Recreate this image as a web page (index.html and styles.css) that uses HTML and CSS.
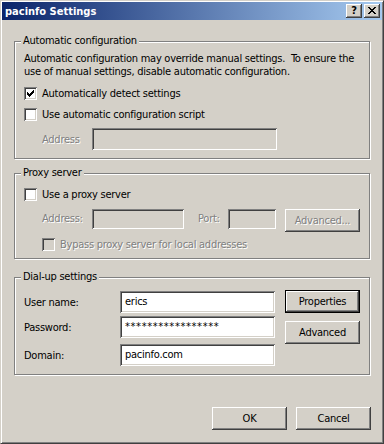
FILE: index.html
```html
<!DOCTYPE html>
<html lang="en">
<head>
  <meta charset="UTF-8" />
  <title>pacinfo Settings</title>
  <link rel="stylesheet" href="styles.css">
</head>
<body>
  <div class="window">
    <div class="titlebar">
      <span class="title">pacinfo Settings</span>
      <div class="caption-btns">
        <div class="cap-btn help">?</div>
        <div class="cap-btn">
          <svg width="8" height="7" viewBox="0 0 8 7" shape-rendering="crispEdges"><path fill="#000" d="M0 0h2v1H0zM6 0h2v1H6zM1 1h2v1H1zM5 1h2v1H5zM2 2h4v1H2zM3 3h2v1H3zM2 4h4v1H2zM1 5h2v1H1zM5 5h2v1H5zM0 6h2v1H0zM6 6h2v1H6z"/></svg>
        </div>
      </div>
    </div>

    <div class="client">
      <div class="group group-auto">
        <div class="legend">Automatic configuration</div>
        <p class="desc">Automatic configuration may override manual settings.&nbsp; To ensure the<br>use of manual settings, disable automatic configuration.</p>
        <div class="check first">
          <span class="box">
            <svg width="7" height="7" viewBox="0 0 7 7" shape-rendering="crispEdges"><path fill="#000" d="M6 0h1v3H6zM5 1h1v3H5zM4 2h1v3H4zM3 3h1v3H3zM2 4h1v3H2zM1 3h1v3H1zM0 2h1v3H0z"/></svg>
          </span>
          <span>Automatically detect settings</span>
        </div>
        <div class="check second">
          <span class="box"></span>
          <span>Use automatic configuration script</span>
        </div>
        <div class="field-row addr">
          <span class="field-label disabled">Address</span>
          <span class="edit off wide"></span>
        </div>
      </div>

      <div class="group group-proxy">
        <div class="legend">Proxy server</div>
        <div class="check first">
          <span class="box"></span>
          <span>Use a proxy server</span>
        </div>
        <div class="proxy-row">
          <span class="field-label disabled">Address:</span>
          <span class="edit off short proxy-addr"></span>
          <span class="port-label disabled">Port:</span>
          <span class="edit off short port"></span>
          <button class="btn disabled-btn">Advanced...</button>
        </div>
        <div class="check bypass">
          <span class="box off"></span>
          <span class="disabled">Bypass proxy server for local addresses</span>
        </div>
      </div>

      <div class="group group-dial">
        <div class="legend">Dial-up settings</div>
        <div class="dial">
          <div class="dial-fields">
            <div class="dial-row user">
              <span class="dial-label">User name:</span>
              <span class="edit">erics</span>
            </div>
            <div class="dial-row pass">
              <span class="dial-label">Password:</span>
              <span class="edit stars">*****************</span>
            </div>
            <div class="dial-row domain">
              <span class="dial-label">Domain:</span>
              <span class="edit">pacinfo.com</span>
            </div>
          </div>
          <div class="dial-btns">
            <button class="btn default">Properties</button>
            <button class="btn">Advanced</button>
          </div>
        </div>
      </div>

      <div class="footer">
        <button class="btn">OK</button>
        <button class="btn">Cancel</button>
      </div>
    </div>
  </div>
</body>
</html>
```

FILE: styles.css
```css
body {
  margin: 0;
  background: #d4d0c8;
  font-family: "DejaVu Sans Condensed", "DejaVu Sans", sans-serif;
  font-size: 11px;
  letter-spacing: -0.25px;
  color: #000;
}
.window {
  width: 384px;
  height: 444px;
  box-sizing: border-box;
  background: #d4d0c8;
  border-top: 1px solid #d4d0c8;
  border-left: 1px solid #d4d0c8;
  border-right: 1px solid #404040;
  border-bottom: 1px solid #404040;
  box-shadow: inset 1px 1px #fff, inset -1px -1px #808080;
  padding: 1px;
  display: flex;
  flex-direction: column;
}
.titlebar {
  height: 18px;
  flex: none;
  background: linear-gradient(90deg, #0a246a 0%, #a6caf0 100%);
  display: flex;
  align-items: center;
  padding: 0 2px 0 3px;
}
.title {
  color: #fff;
  font-weight: bold;
  font-size: 11px;
  letter-spacing: 0;
}
.caption-btns {
  margin-left: auto;
  display: flex;
  gap: 2px;
}
.cap-btn {
  width: 16px;
  height: 14px;
  box-sizing: border-box;
  background: #d4d0c8;
  box-shadow: inset -1px -1px #404040, inset 1px 1px #fff, inset -2px -2px #808080, inset 2px 2px #d4d0c8;
  display: flex;
  align-items: center;
  justify-content: center;
}
.cap-btn svg {
  margin: 0 0 1px 0;
}
.help {
  font-weight: bold;
  font-size: 11px;
  line-height: 14px;
  letter-spacing: 0;
}
.client {
  flex: 1;
  padding: 0 12px;
}
.group {
  box-sizing: border-box;
  width: 356px;
  border: 1px solid #808080;
  box-shadow: inset 1px 1px #fff, 1px 1px #fff;
}
.group-auto {
  margin-top: 21px;
  height: 118px;
}
.group-proxy {
  margin-top: 14px;
  height: 86px;
}
.group-dial {
  margin-top: 18px;
  height: 98px;
}
.legend {
  display: table;
  margin: -8px 0 0 6px;
  padding: 0 2px;
  line-height: 13px;
  background: #d4d0c8;
}
.desc {
  margin: 5px 0 0 9px;
  line-height: 13px;
  white-space: nowrap;
}
.check {
  display: flex;
  align-items: center;
  height: 13px;
  line-height: 13px;
  margin-left: 9px;
}
.check.first { margin-top: 9px; }
.check.second { margin-top: 8px; }
.check.bypass {
  margin-top: 6px;
  margin-left: 27px;
}
.box {
  width: 13px;
  height: 13px;
  flex: none;
  box-sizing: border-box;
  background: #fff;
  box-shadow: inset 1px 1px #808080, inset -1px -1px #fff, inset 2px 2px #404040, inset -2px -2px #d4d0c8;
  margin-right: 5px;
  display: flex;
  padding: 3px;
}
.box.off { background: #d4d0c8; }
.disabled {
  color: #808080;
  text-shadow: 1px 1px #fff;
}
.field-row {
  display: flex;
  align-items: center;
  margin-left: 27px;
}
.field-row.addr { margin-top: 7px; }
.field-label {
  width: 50px;
  flex: none;
}
.edit {
  box-sizing: border-box;
  height: 22px;
  background: #fff;
  box-shadow: inset 1px 1px #808080, inset -1px -1px #fff, inset 2px 2px #404040, inset -2px -2px #d4d0c8;
  padding: 0 5px;
  line-height: 21px;
  white-space: nowrap;
  overflow: hidden;
}
.edit.off { background: #d4d0c8; }
.edit.wide { width: 185px; }
.edit.short { height: 20px; }
.proxy-row {
  display: flex;
  align-items: flex-start;
  margin: 8px 0 0 27px;
  line-height: 20px;
}
.proxy-addr { width: 92px; }
.port-label {
  width: 30px;
  margin-left: 14px;
}
.port { width: 48px; }
.btn {
  width: 75px;
  height: 23px;
  box-sizing: border-box;
  background: #d4d0c8;
  border: none;
  padding: 0;
  font: inherit;
  letter-spacing: inherit;
  color: #000;
  box-shadow: inset -1px -1px #404040, inset 1px 1px #fff, inset -2px -2px #808080, inset 2px 2px #d4d0c8;
}
.btn.default {
  box-shadow: inset 0 0 0 1px #000, inset -2px -2px #404040, inset 2px 2px #fff, inset -3px -3px #808080;
}
.disabled-btn {
  margin-left: 9px;
  color: #808080;
  text-shadow: 1px 1px #fff;
}
.dial {
  display: flex;
  margin: 7px 0 0 9px;
}
.dial-fields {
  display: flex;
  flex-direction: column;
}
.dial-row {
  display: flex;
  align-items: center;
}
.dial-row.user { margin-top: 1px; }
.dial-row.pass { margin-top: 3px; }
.dial-row.domain { margin-top: 6px; }
.dial-label { width: 96px; }
.dial-row .edit { width: 155px; }
.stars { letter-spacing: 0.6px; }
.dial-btns {
  display: flex;
  flex-direction: column;
  gap: 8px;
  margin-left: 10px;
}
.footer {
  display: flex;
  justify-content: flex-end;
  gap: 9px;
  margin: 32px -1px 0 0;
}
```
